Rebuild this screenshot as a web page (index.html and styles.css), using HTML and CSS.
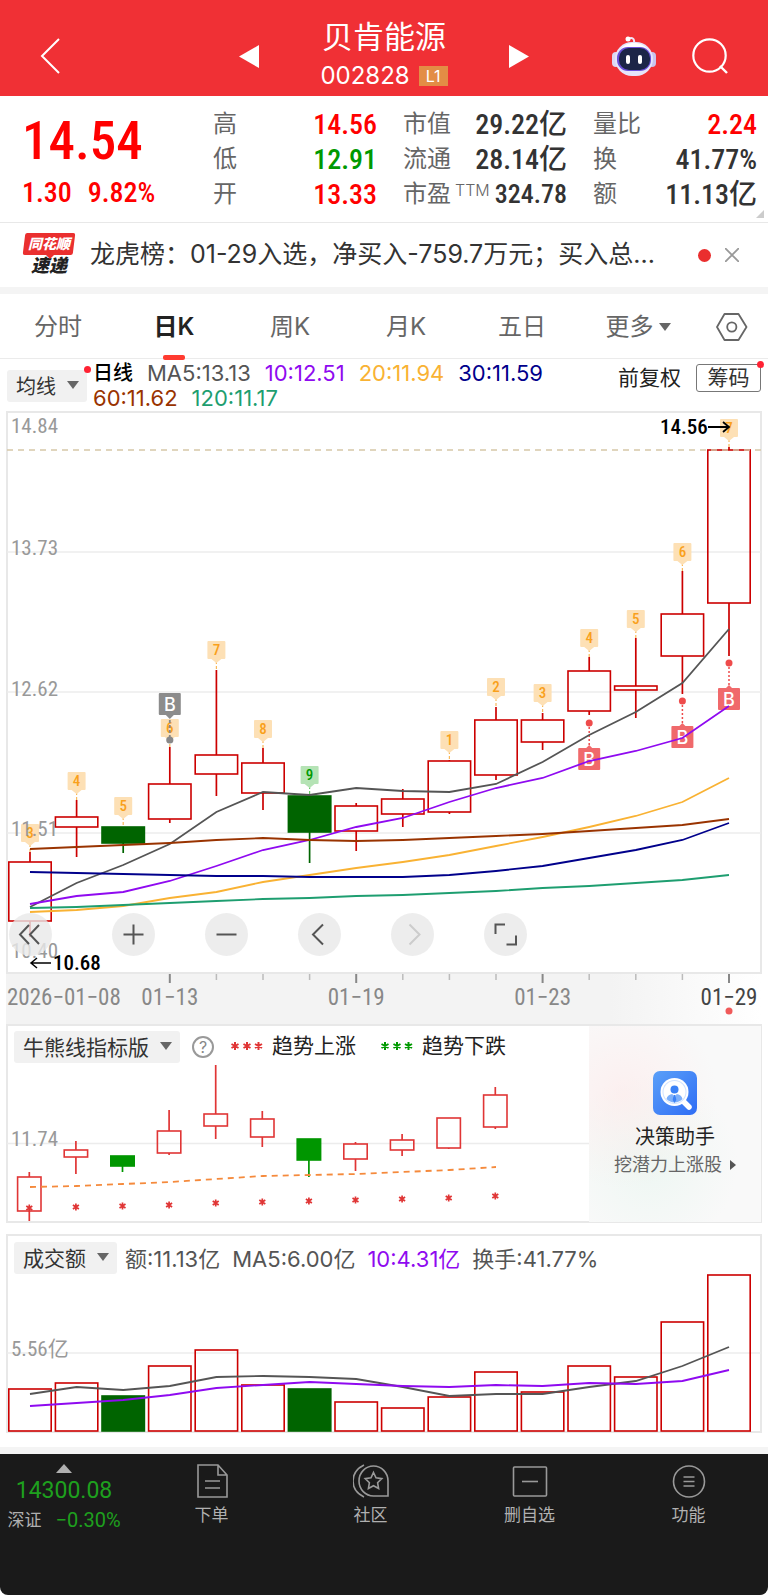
FILE: index.html
```html
<!DOCTYPE html>
<html lang="zh-CN">
<head>
<meta charset="utf-8">
<meta name="viewport" content="width=device-width, initial-scale=1">
<title>贝肯能源 002828</title>
<link rel="stylesheet" href="styles.css">
</head>
<body>
<header class="topbar">
  <div class="topbar-side">
    <button class="icon-btn" aria-label="返回">
      <svg width="20" height="36" viewBox="0 0 20 36"><path d="M19 1 2 18l17 17" fill="none" stroke="#fff" stroke-width="2"/></svg>
    </button>
  </div>
  <div class="topbar-center">
    <button class="icon-btn" aria-label="上一只"><svg width="20" height="23" viewBox="0 0 20 23"><path d="M0 11.500 20 0v23z" fill="#fff"/></svg></button>
    <div class="stock">
      <h1 class="stock-name">贝肯能源</h1>
      <div class="stock-code"><span>002828</span><span class="badge">L1</span></div>
    </div>
    <button class="icon-btn" aria-label="下一只"><svg width="20" height="23" viewBox="0 0 20 23"><path d="M20 11.500 0 0v23z" fill="#fff"/></svg></button>
  </div>
  <div class="topbar-side topbar-right">
    <button class="icon-btn" aria-label="智能助手">
      <svg width="44" height="42" viewBox="0 0 44 42">
        <path d="M16 4c4-2 7-1 6 5" fill="none" stroke="#f1e4f6" stroke-width="2"/>
        <circle cx="16" cy="4" r="2.500" fill="#fff"/>
        <rect x="0" y="17" width="8" height="15" rx="4" fill="#dcd8f5"/>
        <rect x="36" y="17" width="8" height="15" rx="4" fill="#c9c4ee"/>
        <rect x="3" y="7" width="38" height="34" rx="17" fill="#e6e4fa"/>
        <path d="M7 18C10 10 16 8 22 8s12 2 15 10z" fill="#fff"/>
        <rect x="5" y="12" width="34" height="24" rx="11" fill="#6a4fd8"/>
        <rect x="7" y="13" width="31" height="22" rx="10" fill="#1c2547"/>
        <rect x="14" y="20" width="4" height="9" rx="2" fill="#fff"/>
        <rect x="26" y="20" width="4" height="9" rx="2" fill="#fff"/>
      </svg>
    </button>
    <button class="icon-btn" aria-label="搜索">
      <svg width="36" height="36" viewBox="0 0 36 36"><circle cx="17.500" cy="17.500" r="16.200" fill="none" stroke="#fff" stroke-width="2.200"/><path d="m28 28 7 7" stroke="#fff" stroke-width="2.400"/></svg>
    </button>
  </div>
</header>

<section class="quote">
  <div class="price-block">
    <div class="price">14.54</div>
    <div class="change"><span>1.30</span><span>9.82%</span></div>
  </div>
  <dl class="stats">
    <div class="stat"><dt>高</dt><dd class="up">14.56</dd></div>
    <div class="stat"><dt>市值</dt><dd>29.22亿</dd></div>
    <div class="stat"><dt>量比</dt><dd class="up">2.24</dd></div>
    <div class="stat"><dt>低</dt><dd class="down">12.91</dd></div>
    <div class="stat"><dt>流通</dt><dd>28.14亿</dd></div>
    <div class="stat"><dt>换</dt><dd>41.77%</dd></div>
    <div class="stat"><dt>开</dt><dd class="up">13.33</dd></div>
    <div class="stat"><dt>市盈<span class="ttm">TTM</span></dt><dd class="small">324.78</dd></div>
    <div class="stat"><dt>额</dt><dd>11.13亿</dd></div>
  </dl>
  <span class="corner"></span>
</section>

<section class="news">
  <div class="news-logo"><span class="logo-top">同花顺</span><span class="logo-bottom">速递</span></div>
  <a class="news-text" href="#news">龙虎榜：01-29入选，净买入-759.7万元；买入总...</a>
  <span class="dot news-dot"></span>
  <button class="icon-btn" aria-label="关闭"><svg width="14" height="14" viewBox="0 0 14 14"><path d="m0 0 14 14M14 0 0 14" stroke="#999" stroke-width="1.800"/></svg></button>
</section>

<nav class="tabs">
  <a href="#min">分时</a>
  <a href="#day" class="active">日K</a>
  <a href="#week">周K</a>
  <a href="#month">月K</a>
  <a href="#five">五日</a>
  <button class="more">更多<span class="caret"></span></button>
  <button class="icon-btn" aria-label="设置"><svg width="32" height="28" viewBox="0 0 32 28"><path d="M8.500 1h14L30.500 14l-8 13h-14L1 14z" fill="none" stroke="#666" stroke-width="1.800" stroke-linejoin="round"/><circle cx="15.800" cy="14" r="4.600" fill="none" stroke="#666" stroke-width="1.800"/></svg></button>
</nav>

<section class="ma-row">
  <button class="select ma-select">均线<span class="caret"></span><span class="dot badge-dot"></span></button>
  <div class="ma-values">
    <span class="k-type">日线</span>
    <span class="c-grey">MA5:13.13</span>
    <span class="c-purple">10:12.51</span>
    <span class="c-amber">20:11.94</span>
    <span class="c-navy">30:11.59</span>
    <span class="c-brown">60:11.62</span>
    <span class="c-teal">120:11.17</span>
  </div>
  <button class="adjust">前复权</button>
  <button class="chips">筹码<span class="dot badge-dot"></span></button>
</section>

<section class="kline">
  <svg id="kline" class="chart" viewBox="0 411 768 613" role="img" aria-label="日K线图"></svg>
  <div class="chart-tools">
    <button class="tool tool-first" aria-label="最早"><svg viewBox="0 0 43 43"><path d="M20 12 11 21.500 20 31M30 12l-9 9.500 9 9.500"/></svg></button>
    <button class="tool" aria-label="放大"><svg viewBox="0 0 43 43"><path d="M11.500 21.500h20M21.500 11.500v20"/></svg></button>
    <button class="tool" aria-label="缩小"><svg viewBox="0 0 43 43"><path d="M11.500 21.500h20"/></svg></button>
    <button class="tool" aria-label="左移"><svg viewBox="0 0 43 43"><path d="m25 11.500-10 10 10 10"/></svg></button>
    <button class="tool tool-off" aria-label="右移" disabled><svg viewBox="0 0 43 43"><path d="m18.500 11.500 10 10-10 10"/></svg></button>
    <button class="tool" aria-label="全屏"><svg viewBox="0 0 43 43"><path d="M11.500 21v-9.500H21M32 22.500V31.500H22.500"/></svg></button>
  </div>
</section>

<section class="panel trend">
  <svg id="trend" class="chart" viewBox="0 1024 768 200" role="img" aria-label="牛熊线指标"></svg>
  <div class="panel-head">
    <button class="select">牛熊线指标版<span class="caret"></span></button>
    <button class="icon-btn help" aria-label="说明">?</button>
    <span class="legend"><svg class="stars red" width="32" height="10" viewBox="0 0 32 10"><path d="M4 1v8M0.500 3l7 4M7.500 3l-7 4M16 1v8M12.500 3l7 4M19.500 3l-7 4M27.500 1v8M24 3l7 4M31 3l-7 4"/></svg>趋势上涨</span>
    <span class="legend"><svg class="stars green" width="32" height="10" viewBox="0 0 32 10"><path d="M4 1v8M0.500 3l7 4M7.500 3l-7 4M16 1v8M12.500 3l7 4M19.500 3l-7 4M27.500 1v8M24 3l7 4M31 3l-7 4"/></svg>趋势下跌</span>
  </div>
  <a class="promo" href="#assistant">
    <svg width="44" height="44" viewBox="0 0 44 44">
      <defs><linearGradient id="blue" x1="0" y1="0" x2="1" y2="1"><stop offset="0" stop-color="#5ba0f8"/><stop offset="1" stop-color="#2f6df5"/></linearGradient></defs>
      <rect width="44" height="44" rx="7" fill="url(#blue)"/>
      <path d="m31 31 5 5" stroke="#fff" stroke-width="5.500" stroke-linecap="round"/>
      <circle cx="21.500" cy="21" r="14" fill="#fff"/>
      <circle cx="21.500" cy="21" r="12" fill="#cfe2ff"/>
      <circle cx="21.500" cy="21" r="11" fill="#fff"/>
      <circle cx="21.500" cy="18.500" r="4" fill="#3b82f6"/>
      <path d="M13.500 28c.5-3 3-4.500 6-5l2 7 2-7c3 .5 5.500 2 6 5-4 4.500-12 4.500-16 0z" fill="#7db0fa"/>
      <path d="m20.500 24h2l.8 5-1.800 3-1.800-3z" fill="#3b82f6"/>
    </svg>
    <span class="promo-title">决策助手</span>
    <span class="promo-sub">挖潜力上涨股<span class="caret-right"></span></span>
  </a>
</section>

<section class="panel volume">
  <svg id="volume" class="chart" viewBox="0 1234 768 199" role="img" aria-label="成交额"></svg>
  <div class="panel-head">
    <button class="select">成交额<span class="caret"></span></button>
    <div class="vol-values">
      <span>额:11.13亿</span>
      <span>MA5:6.00亿</span>
      <span class="c-purple">10:4.31亿</span>
      <span>换手:41.77%</span>
    </div>
  </div>
</section>

<footer class="bottombar">
  <a class="index" href="#index">
    <span class="caret-up"></span>
    <span class="index-value">14300.08</span>
    <span class="index-row"><span class="index-name">深证</span><span>−0.30%</span></span>
  </a>
  <a class="action" href="#order">
    <svg width="36" height="36" viewBox="0 0 36 36"><path d="M24 2H4v32h29V12zM24 2v10h9M11 18h15M11 25h15"/></svg>下单</a>
  <a class="action" href="#community">
    <svg width="36" height="36" viewBox="0 0 36 36"><path d="M11 2C3 6 0 12 0 18s3 12 11 16M6 18a14.500 15 0 0 1 29 0v15H20.500A14.500 15 0 0 1 6 18zM20.500 9.500l2.500 5.300 5.800.8-4.200 4.100 1 5.800-5.100-2.800-5.100 2.800 1-5.800-4.200-4.100 5.800-.8z"/></svg>社区</a>
  <a class="action" href="#remove">
    <svg width="36" height="36" viewBox="0 0 36 36"><rect x="1.500" y="4" width="33" height="29" rx="1"/><path d="M10 18.500h16"/></svg>删自选</a>
  <a class="action" href="#features">
    <svg width="36" height="36" viewBox="0 0 36 36"><circle cx="18" cy="18.500" r="15.500"/><path d="M12.500 14h11M12.500 18.500h11M12.500 23h11"/></svg>功能</a>
</footer>
<script src="charts.js"></script>
</body>
</html>
```

FILE: styles.css
```css
* { box-sizing: border-box; }

body {
  margin: 0;
  background: #fff;
  color: #333;
  font-family: Inter, "Noto Sans CJK SC", sans-serif;
  font-size: 21px;
}

button {
  margin: 0;
  padding: 0;
  border: 0;
  background: none;
  color: inherit;
  font: inherit;
}

a { color: inherit; text-decoration: none; }

.icon-btn { display: flex; align-items: center; justify-content: center; }

.dot { border-radius: 50%; background: #ea2f2f; }

.caret {
  display: inline-block;
  border: 6px solid transparent;
  border-top: 8px solid #666;
  border-bottom: 0;
}

.up { color: #f00; }
.down { color: #090; }
.c-grey { color: #555; }
.c-purple { color: #8f0af0; }
.c-amber { color: #f9b233; }
.c-navy { color: #00008b; }
.c-brown { color: #993300; }
.c-teal { color: #1e9e70; }

/* Top bar */
.topbar {
  display: grid;
  grid-template-columns: 1fr 290px 1fr;
  align-items: center;
  height: 96px;
  padding-top: 16px;
  background: #f03035;
  color: #fff;
}
.topbar-side { display: flex; padding-left: 40px; }
.topbar-right { justify-content: flex-end; gap: 36px; padding: 0 40px 0 0; }
.topbar-center { display: flex; align-items: center; justify-content: space-between; }
.stock { text-align: center; }
.stock-name { margin: 0; font-size: 31px; font-weight: 400; line-height: 40px; }
.stock-code { display: flex; align-items: center; gap: 9px; font-size: 24px; line-height: 38px; }
.badge {
  padding: 0 7px;
  background: #e38d45;
  font-size: 16px;
  line-height: 20px;
}

/* Quote */
.quote {
  position: relative;
  display: grid;
  grid-template-columns: 213px 1fr;
  padding: 11px 11px 10px 0;
  border-bottom: 1px solid #e8e8e8;
  font-family: "Roboto Condensed", "Liberation Sans Narrow", Roboto, "Noto Sans CJK SC", sans-serif;
}
.price-block { padding-left: 22px; color: #f00; font-weight: 500; }
.price { font-size: 53px; line-height: 68px; }
.change { display: flex; gap: 16px; font-size: 28px; line-height: 36px; }
.stats {
  display: grid;
  grid-template-columns: repeat(3, 1fr);
  column-gap: 26px;
  margin: 0;
}
.stat { display: flex; justify-content: space-between; line-height: 35px; height: 35px; white-space: nowrap; }
.stat dt { color: #666; font-size: 24px; font-weight: 400; }
.stat dd { margin: 0; font-size: 28px; font-weight: 500; }
.stat .small { font-size: 26px; }
.ttm { font-family: Inter, sans-serif; font-size: 16px; font-weight: 300; vertical-align: 6px; line-height: 1; padding-left: 4px; }
.corner {
  position: absolute;
  right: 4px;
  bottom: 4px;
  border: 4px solid #ccc;
  border-top-color: transparent;
  border-left-color: transparent;
}

/* News */
.news {
  display: flex;
  align-items: center;
  height: 71px;
  padding: 0 29px 0 23px;
  border-bottom: 7px solid #f4f4f4;
}
.news-logo { display: flex; flex-direction: column; align-items: center; width: 52px; font-style: italic; font-weight: 900; }
.logo-top {
  position: relative;
  z-index: 0;
  width: 50px;
  color: #fff;
  font-size: 14px;
  line-height: 22px;
  text-align: center;
}
.logo-top::before {
  content: "";
  position: absolute;
  inset: 0;
  z-index: -1;
  border-radius: 2px;
  background: #ea2f2f;
  transform: skewX(-7deg);
}
.logo-top::after {
  content: "";
  position: absolute;
  left: 22px;
  top: 22px;
  border: 4px solid transparent;
  border-top-color: #ea2f2f;
  border-bottom: 0;
}
.logo-bottom { font-size: 18px; line-height: 22px; color: #222; }
.news-text { flex: 1; padding-left: 15px; font-size: 25px; line-height: 36px; padding-bottom: 2px; white-space: nowrap; }
.news-dot { width: 13px; height: 13px; margin-right: 14px; }

/* Tabs */
.tabs {
  display: grid;
  grid-template-columns: repeat(6, 29fr) 18fr;
  height: 65px;
  border-bottom: 1px solid #ebebeb;
  color: #666;
  font-size: 24px;
  line-height: 66px;
  text-align: center;
}
.tabs .active { position: relative; color: #222; font-weight: 600; }
.tabs .active::after {
  content: "";
  position: absolute;
  left: 50%;
  bottom: 0;
  width: 22px;
  height: 5px;
  margin-left: -11px;
  border-radius: 2px;
  background: #ff3b30;
}
.more { display: flex; align-items: center; justify-content: center; gap: 5px; }

/* Moving averages */
.ma-row { display: flex; align-items: flex-start; height: 52px; padding: 0 7px; }
.select {
  position: relative;
  display: flex;
  align-items: center;
  gap: 11px;
  height: 32px;
  padding: 0 8px 2px 9px;
  border-radius: 3px;
  background: #f1f1f1;
  white-space: nowrap;
}
.ma-select { margin-top: 11px; font-size: 20px; }
.badge-dot { position: absolute; top: -4px; right: -4px; width: 7px; height: 7px; background: #ff2233; }
.ma-values {
  display: flex;
  flex: 1;
  flex-wrap: wrap;
  column-gap: 14px;
  padding: 2px 0 0 6px;
  font-size: 22px;
  line-height: 25px;
}
.k-type { color: #000; font-size: 20px; font-weight: 500; }
.adjust { padding: 5px 15px 0 0; color: #222; line-height: 28px; }
.chips {
  position: relative;
  width: 65px;
  height: 28px;
  margin-top: 5px;
  border: 1px solid #777;
  border-radius: 3px;
  line-height: 26px;
}

/* Charts */
.chart { display: block; width: 100%; height: auto; font-family: "Roboto Condensed", "Liberation Sans Narrow", Roboto, "Noto Sans CJK SC", sans-serif; }
.kline { position: relative; }
.chart-tools { position: absolute; left: 9px; bottom: 68px; display: flex; gap: 50px; }
.tool { width: 43px; height: 43px; border-radius: 50%; background: rgba(232, 232, 232, 0.8); }
.tool-first { margin-right: 10px; }
.tool svg { display: block; fill: none; stroke: #555; stroke-width: 2; }
.tool-off svg { stroke: #ccc; }

.frame { fill: none; stroke: #e8e8e8; stroke-width: 2; }
.grid { stroke: #ececec; stroke-width: 1.500; }
.axis-label { fill: #999; font-size: 21px; }
.date { fill: #888; font-size: 23px; }
.date-last { fill: #444; }
.mark-label { fill: #000; font-size: 21px; font-weight: 500; }
.flag { font-size: 15px; font-weight: 500; text-anchor: middle; }
.buy { fill: #fff; font-family: Inter, sans-serif; font-size: 18px; font-weight: 500; text-anchor: middle; }
.middle { text-anchor: middle; }

.panel { display: grid; }
.panel > * { grid-area: 1 / 1; }
.panel-head { display: flex; align-items: center; align-self: start; padding: 7px 14px; }
.trend { margin-bottom: 10px; }
.help {
  width: 22px;
  height: 22px;
  margin: 0 17px 0 12px;
  border: 2px solid #999;
  border-radius: 50%;
  color: #888;
  font-size: 16px;
}
.legend { display: flex; align-items: center; gap: 9px; margin-right: 25px; color: #222; line-height: 30px; padding-bottom: 2px; }
.stars { fill: none; stroke-width: 2; }
.red { stroke: #e03535; }
.green { stroke: #090; }
.promo {
  display: flex;
  flex-direction: column;
  align-items: center;
  justify-self: end;
  width: 172px;
  margin: 2px 7px;
  padding-top: 45px;
  background:
    radial-gradient(circle at 20% 35%, rgba(255, 230, 230, 0.5), transparent 50%),
    radial-gradient(circle at 35% 70%, rgba(230, 245, 238, 0.6), transparent 50%),
    #f9f9f9;
}
.promo-title { margin-top: 7px; font-size: 20px; line-height: 30px; color: #222; }
.promo-sub { display: flex; align-items: center; gap: 8px; font-size: 18px; line-height: 25px; color: #666; }
.caret-right { border: 5px solid transparent; border-left: 6px solid #555; border-right: 0; }

.volume { padding-bottom: 14px; border-bottom: 7px solid #f4f4f4; }
.vol-values { display: flex; gap: 12px; padding: 0 0 2px 8px; color: #555; font-size: 22px; white-space: nowrap; }

/* Bottom bar */
.bottombar {
  display: grid;
  grid-template-columns: 132px repeat(4, 1fr);
  min-height: 141px;
  border-radius: 0 0 8px 8px;
  background: #1a1a1a;
  color: #b0b0b0;
}
.index {
  display: flex;
  flex-direction: column;
  align-items: center;
  padding: 10px 4px 0 0;
  color: #1ea01e;
  font-family: Roboto, "Noto Sans CJK SC", sans-serif;
}
.caret-up { border: 8px solid transparent; border-bottom: 9px solid #b0b0b0; border-top: 0; }
.index-value { font-size: 23px; line-height: 35px; }
.index-row { display: flex; gap: 14px; font-size: 20px; line-height: 24px; }
.index-name { color: #b0b0b0; font-size: 17px; }
.action { display: flex; flex-direction: column; align-items: center; padding-top: 9px; font-size: 17px; line-height: 32px; }
.action svg { fill: none; stroke: #999; stroke-width: 1.600; }
```

FILE: charts.js
```js
const STEP = 46.6;
const x = i => 30 + STEP * i;
const RED = '#c00', DARK_GREEN = '#006400';

const line = (x1, y1, x2, y2, attrs) => `<line x1="${x1}" y1="${y1}" x2="${x2}" y2="${y2}" ${attrs}/>`;
const label = (tx, ty, cls, text, fill) => `<text x="${tx}" y="${ty}" class="${cls}"${fill ? ` fill="${fill}"` : ''}>${text}</text>`;
const poly = (ys, color, offset = 0, extra = '') =>
  `<polyline points="${ys.map((y, i) => `${x(i) + offset},${y}`).join(' ')}" fill="none" stroke="${color}" stroke-width="1.8" ${extra}/>`;

function box(cx, top, bottom, width, color, filled) {
  return `<rect x="${cx - width / 2 + 0.8}" y="${top}" width="${width - 1.6}" height="${bottom - top}" fill="${filled ? color : '#fff'}" fill-opacity="${filled ? 1 : 0}" stroke="${color}" stroke-width="1.6"/>`;
}

function candle(cx, [top, bottom, high, low, down], width, up, fall) {
  const color = down ? fall : up;
  return line(cx, high, cx, top, `stroke="${color}" stroke-width="1.7"`) +
    line(cx, bottom, cx, low, `stroke="${color}" stroke-width="1.7"`) +
    box(cx, top, bottom, width, color, down);
}

/* Daily candles: body top, body bottom, high, low, falling */
const days = [
  [862, 921, 852, 937], [817, 827, 800, 857], [827, 843, 827, 853, 1], [784, 819, 747, 823],
  [755, 774, 670, 796], [763, 793, 748, 810], [796, 832, 796, 863, 1], [806, 831, 803, 851],
  [799, 814, 789, 827], [761, 812, 760, 814], [720, 775, 707, 780], [720, 742, 713, 750],
  [671, 711, 657, 715], [686, 690, 638, 718], [614, 656, 571, 694], [450, 603, 447, 656]
];
const averages = {
  '#555': [907, 883, 865, 844, 812, 792, 795, 788, 791, 792, 784, 762, 735, 712, 683, 629],
  '#8f0af0': [904, 896, 892, 881, 866, 850, 840, 827, 818, 802, 788, 778, 761, 751, 738, 706],
  '#f9b233': [912, 910, 906, 898, 892, 882, 875, 868, 862, 855, 846, 837, 827, 816, 802, 778],
  '#00008b': [872, 873, 874, 875, 876, 876, 877, 877, 877, 875, 871, 866, 858, 850, 840, 823],
  '#993300': [849, 847, 845, 843, 840, 838, 840, 841, 840, 838, 836, 834, 831, 828, 825, 819],
  '#1e9e70': [908, 907, 905, 903, 901, 899, 898, 896, 895, 893, 891, 888, 886, 883, 880, 875]
};
/* Sequence flags: day, top, count */
const flags = [
  [0, 824, 3], [1, 772, 4], [2, 797, 5], [3, 719, 6], [4, 641, 7], [5, 720, 8], [6, 766, 9],
  [9, 731, 1], [10, 678, 2], [11, 684, 3], [12, 629, 4], [13, 610, 5], [14, 543, 6], [15, 419, 7]
];

function drawKline() {
  let s = `<defs><linearGradient id="fade"><stop offset="0" stop-color="#f3f3f3"/><stop offset=".8" stop-color="#f3f3f3"/><stop offset="1" stop-color="#fff"/></linearGradient></defs>
    <rect x="6" y="973" width="755" height="51" fill="url(#fade)"/>
    <rect x="7" y="412" width="754" height="561" class="frame"/>`;
  [552, 692, 833].forEach(y => { s += line(7, y, 761, y, 'class="grid"'); });
  flags.forEach(([i, top, n]) => {
    const green = n === 9, cx = x(i), bg = green ? '#b5e3b5' : '#fde0b5', ink = green ? '#090' : '#f9a01b';
    s += line(cx, top + 20, cx, days[i][2], `stroke="${green ? '#6c6' : '#f9b85a'}" stroke-width="1.2" stroke-dasharray="3 2"`);
    s += `<rect x="${cx - 9}" y="${top}" width="18" height="18" rx="1" fill="${bg}"/><path d="M${cx - 5} ${top + 18}h10l-5 4z" fill="${bg}"/>`;
    s += label(cx, top + 14, 'flag', n, ink);
  });
  days.forEach((d, i) => { s += candle(x(i), d, 44, RED, DARK_GREEN); });
  s += line(7, 450, 761, 450, 'stroke="#d6c8a8" stroke-width="1.5" stroke-dasharray="6 5"');
  [[12, 723, 748], [14, 701, 726], [15, 663, 688]].forEach(([i, dot, top]) => {
    const cx = x(i);
    s += `<circle cx="${cx}" cy="${dot}" r="3.5" fill="#ee4b4b"/>` +
      line(cx, dot, cx, top, 'stroke="#ee4b4b" stroke-width="1.5" stroke-dasharray="2 2"') +
      `<rect x="${cx - 11}" y="${top}" width="22" height="22" rx="1" fill="#f0696b"/><path d="M${cx - 3} ${top}h6l-3-3z" fill="#f0696b"/>` +
      label(cx, top + 18, 'buy', 'B');
  });
  const bx = x(3);
  s += line(bx, 715, bx, 740, 'stroke="#888" stroke-width="1.8" stroke-dasharray="3 2"') +
    `<circle cx="${bx}" cy="740" r="3.6" fill="#888"/><rect x="${bx - 11}" y="693" width="22" height="22" rx="1" fill="#8c8c8c"/><path d="M${bx - 4} 715h8l-4 4z" fill="#8c8c8c"/>` +
    label(bx, 711, 'buy', 'B');
  Object.entries(averages).forEach(([color, ys]) => { s += poly(ys, color); });
  [['14.84', 433], ['13.73', 555], ['12.62', 696], ['11.51', 836], ['10.40', 958]].forEach(([t, y]) => { s += label(11, y, 'axis-label', t); });
  s += label(660, 434, 'mark-label', '14.56') + '<path d="M708 427h21m-6-5 6 5-6 5" fill="none" stroke="#000" stroke-width="1.8"/>';
  s += label(53, 970, 'mark-label', '10.68') + '<path d="M51 963H31m6-5-6 5 6 5" fill="none" stroke="#000" stroke-width="1.5"/>';
  for (let i = 3; i < 16; i++) {
    const major = i % 4 === 3;
    s += line(x(i), 974, x(i), major ? 983 : 980, `stroke="${major ? '#888' : '#bbb'}" stroke-width="${major ? 2 : 1.5}"`);
  }
  s += label(7, 1005, 'date', '2026−01−08');
  [[3, '01−13'], [7, '01−19'], [11, '01−23'], [15, '01−29']].forEach(([i, t]) => {
    s += label(x(i), 1005, i === 15 ? 'date middle date-last' : 'date middle', t);
  });
  s += `<circle cx="${x(15)}" cy="1011" r="3.5" fill="#f05a5a"/>`;
  document.getElementById('kline').innerHTML = s;
}

function drawTrend() {
  const bars = [
    [1177, 1211, 1172, 1221], [1150, 1157, 1141, 1174], [1156, 1166, 1156, 1172, 1], [1131, 1153, 1110, 1155],
    [1114, 1126, 1065, 1139], [1119, 1137, 1111, 1147], [1139, 1160, 1139, 1177, 1], [1144, 1159, 1142, 1171],
    [1140, 1150, 1134, 1156], [1118, 1148, 1118, 1149], [1095, 1127, 1087, 1129]
  ];
  const bull = [1187, 1186, 1184, 1182, 1179, 1176, 1175, 1174, 1172, 1170, 1167];
  const stars = [1208, 1207, 1206, 1205, 1203, 1202, 1201, 1200, 1199, 1198, 1196];
  let s = '<rect x="7" y="1025" width="754" height="197" class="frame"/>' + line(7, 1143.5, 761, 1143.5, 'class="grid"');
  bars.forEach((d, i) => { s += candle(x(i) - 0.7, d, 25, '#e03535', '#009600'); });
  s += poly(bull, '#f58a3c', 0, 'stroke-dasharray="6 5"');
  stars.forEach((y, i) => {
    s += `<path d="M${x(i) - 0.7} ${y - 3.5}v7m-3-5.5 6 4m0-4-6 4" stroke="#e03535" stroke-width="1.7" fill="none"/>`;
  });
  s += label(11, 1146, 'axis-label', '11.74');
  document.getElementById('trend').innerHTML = s;
}

function drawVolume() {
  const tops = [1389, 1383, 1396, 1366, 1350, 1385, 1389, 1402, 1408, 1397, 1372, 1392, 1366, 1377, 1322, 1275];
  const ma5 = [1394, 1387, 1390, 1386, 1377, 1376, 1377, 1379, 1387, 1396, 1394, 1394, 1387, 1381, 1366, 1347];
  const ma10 = [1406, 1403, 1400, 1395, 1388, 1385, 1382, 1384, 1386, 1387, 1385, 1386, 1383, 1384, 1381, 1370];
  let s = '<rect x="7" y="1235" width="754" height="197" class="frame"/>' + line(7, 1353, 761, 1353, 'class="grid"');
  tops.forEach((t, i) => { s += box(x(i), t, 1431, 44, i === 2 || i === 6 ? DARK_GREEN : RED, i === 2 || i === 6); });
  s += poly(ma5, '#555') + poly(ma10, '#8f0af0') + label(11, 1356, 'axis-label', '5.56亿');
  document.getElementById('volume').innerHTML = s;
}

drawKline();
drawTrend();
drawVolume();
```
